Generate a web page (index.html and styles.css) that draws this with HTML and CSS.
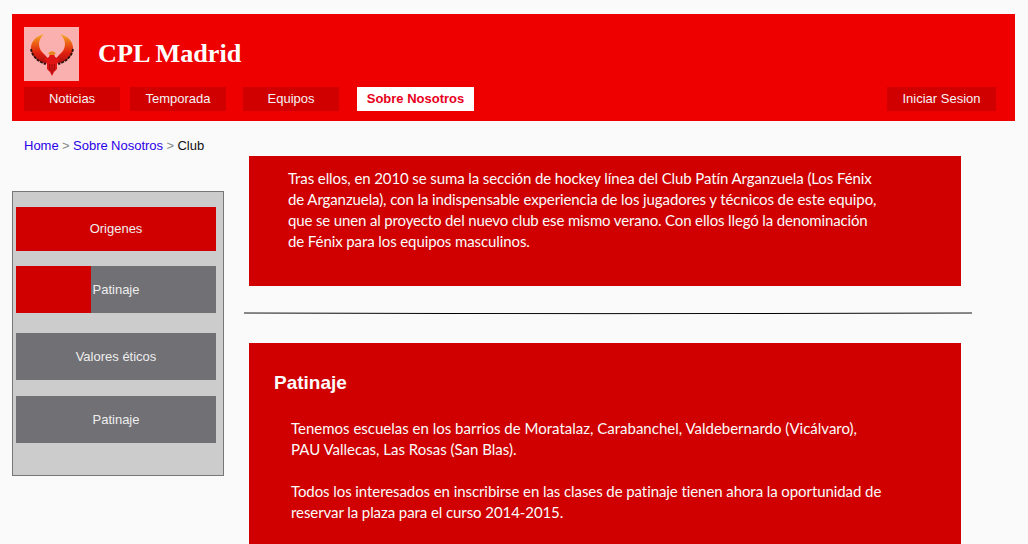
FILE: index.html
```html
<!DOCTYPE html>
<html lang="en">
<head>
    <meta charset="UTF-8">
    <meta name="viewport" content="width=device-width, initial-scale=1.0">
    <title>CPL Madrid</title>
    <link rel="stylesheet" href="styles.css">
</head>
<body>
    <header class="header">
        <div class="brand">
            <div class="logo">
                <svg class="phoenix" width="55" height="54" viewBox="0 0 55 54">
                    <defs>
                        <linearGradient id="wing" x1="0" y1="0" x2="0" y2="1">
                            <stop offset="0" stop-color="#f4b030"/>
                            <stop offset="0.3" stop-color="#ec6414"/>
                            <stop offset="0.65" stop-color="#e0200f"/>
                            <stop offset="1" stop-color="#b01010"/>
                        </linearGradient>
                    </defs>
                    <g>
                        <path d="M20 7C12 9 6 15 7 23C8 29 13 34 20 36L25 36C24 32 23 30 21 28C17 25 15 21 15 17C15 13 17 10 20 7Z" fill="url(#wing)"/>
                        <path d="M7 22C8 29 14 35 22 37" stroke="#2e1210" stroke-width="1.8" stroke-dasharray="3 1" fill="none"/>
                    </g>
                    <g transform="translate(56 0) scale(-1 1)">
                        <path d="M20 7C12 9 6 15 7 23C8 29 13 34 20 36L25 36C24 32 23 30 21 28C17 25 15 21 15 17C15 13 17 10 20 7Z" fill="url(#wing)"/>
                        <path d="M7 22C8 29 14 35 22 37" stroke="#2e1210" stroke-width="1.8" stroke-dasharray="3 1" fill="none"/>
                    </g>
                    <path d="M26 27L25 30L20 32L23 37L23 42L26 45L28 49L30 45L33 42L33 37L36 32L31 30L30 27Z" fill="#e01414"/>
                    <path d="M24 26L28 24L32 26L30 28L26 28Z" fill="#e8861c"/>
                    <path d="M28 37V47M25.5 37L26 44M30.5 37L30 44" stroke="#8a0a0a" stroke-width="0.8" fill="none"/>
                </svg>
            </div>
            <h1 class="title">CPL Madrid</h1>
        </div>
        <nav class="nav">
            <a class="nav-item" href="#">Noticias</a>
            <a class="nav-item" href="#">Temporada</a>
            <a class="nav-item nav-third" href="#">Equipos</a>
            <a class="nav-item nav-active" href="#">Sobre Nosotros</a>
            <a class="nav-item nav-login" href="#">Iniciar Sesion</a>
        </nav>
    </header>

    <div class="breadcrumb">
        <a href="#">Home</a> &gt; <a href="#">Sobre Nosotros</a> &gt; <span class="current">Club</span>
    </div>

    <div class="content">
        <aside class="sidebar">
            <a class="side-item side-first" href="#">Origenes</a>
            <a class="side-item side-sliding" href="#">Patinaje</a>
            <a class="side-item side-third" href="#">Valores éticos</a>
            <a class="side-item side-fourth" href="#">Patinaje</a>
        </aside>

        <main class="main">
            <section class="panel panel-top">
                <p>Tras ellos, en 2010 se suma la sección de hockey línea del Club Patín Arganzuela (Los Fénix<br>de Arganzuela), con la indispensable experiencia de los jugadores y técnicos de este equipo,<br><span class="tight">que se unen al proyecto del nuevo club ese mismo verano. Con ellos llegó la denominación</span><br>de Fénix para los equipos masculinos.</p>
            </section>
            <hr class="divider">
            <section class="panel panel-bottom">
                <h2>Patinaje</h2>
                <p class="loose">Tenemos escuelas en los barrios de Moratalaz, Carabanchel, Valdebernardo (Vicálvaro),<br>PAU Vallecas, Las Rosas (San Blas).</p>
                <p class="medium">Todos los interesados en inscribirse en las clases de patinaje tienen ahora la oportunidad de<br>reservar la plaza para el curso 2014-2015.</p>
            </section>
        </main>
    </div>
</body>
</html>
```

FILE: styles.css
```css
html, body {
    height: 544px;
    overflow: hidden;
}
body {
    margin: 0;
    background-color: #fafafa;
    font-family: "Liberation Sans", Arial, sans-serif;
}
a {
    text-decoration: none;
}
.header {
    margin: 14px 13px 0 12px;
    height: 107px;
    padding: 13px 19px 0 12px;
    box-sizing: border-box;
    background-color: #ee0000;
}
.brand {
    display: flex;
    align-items: center;
    height: 54px;
}
.logo {
    width: 55px;
    height: 54px;
    background-color: #fbb0b0;
}
.phoenix {
    display: block;
    filter: blur(0.4px);
}
.title {
    margin: 0 0 0 19px;
    color: #fff;
    font-family: "Liberation Serif", "Times New Roman", serif;
    font-size: 26.2px;
    font-weight: bold;
}
.nav {
    display: flex;
    margin-top: 6px;
}
.nav-item {
    width: 96px;
    height: 24px;
    margin-right: 10px;
    background-color: #d00000;
    color: #f4f4f4;
    font-size: 13px;
    line-height: 24px;
    text-align: center;
}
.nav-third {
    margin-left: 7px;
    margin-right: 18px;
}
.nav-active {
    width: 117px;
    background-color: #fff;
    color: #e8001c;
    font-weight: bold;
}
.nav-login {
    width: 109px;
    margin-left: auto;
    margin-right: 0;
}
.breadcrumb {
    height: 35px;
    padding-left: 24px;
    box-sizing: border-box;
    padding-top: 17px;
    color: #888;
    font-size: 13px;
    line-height: 15px;
    word-spacing: -0.25px;
}
.breadcrumb a {
    color: #2a00e8;
}
.current {
    color: #111;
}
.content {
    display: flex;
    align-items: flex-start;
    padding-left: 12px;
}
.sidebar {
    width: 212px;
    height: 285px;
    margin-top: 35px;
    padding: 15px 0 0 3px;
    box-sizing: border-box;
    background-color: #cccccc;
    border: 1px solid #777;
}
.side-item {
    display: block;
    width: 200px;
    height: 47px;
    background-color: #717075;
    color: #eee;
    font-size: 13px;
    line-height: 47px;
    text-align: center;
}
.side-first {
    height: 44px;
    background-color: #d00000;
    line-height: 43px;
    margin-bottom: 15px;
}
.side-sliding {
    background: linear-gradient(90deg, #d00000 75px, #717075 75px);
    margin-bottom: 20px;
}
.side-third {
    margin-bottom: 16px;
}
.main {
    width: 712px;
    margin-left: 25px;
}
.panel {
    background-color: #d00000;
    color: #fbfbfb;
    font-family: Lato, sans-serif;
    font-size: 15px;
    line-height: 21px;
    letter-spacing: -0.1px;
}
.panel p {
    margin: 0;
}
.panel .tight {
    letter-spacing: -0.145px;
}
.panel .loose {
    letter-spacing: 0;
}
.panel .medium {
    letter-spacing: -0.08px;
}
.panel-top {
    height: 130px;
    padding: 12px 0 0 39px;
    box-sizing: border-box;
}
.panel-bottom {
    height: 201px;
    padding: 27px 0 0 42px;
    box-sizing: border-box;
}
.panel-bottom h2 {
    margin: 0 0 22px -17px;
    font-family: "Liberation Sans", Arial, sans-serif;
    font-size: 19px;
    line-height: 26px;
    letter-spacing: 0;
}
.panel-bottom p + p {
    margin-top: 21px;
}
.divider {
    width: 728px;
    height: 3px;
    margin: 26px 0 28px -5px;
    border: none;
    background:
        linear-gradient(90deg, #888, #bbb 14%, transparent 28%, transparent 72%, #bbb 86%, #888) top / 100% 1px no-repeat,
        linear-gradient(90deg, #888, #333 18%, #000 28%, #222 50%, #000 72%, #333 82%, #888) center / 100% 1px no-repeat,
        linear-gradient(90deg, transparent 35%, #ddd 50%, transparent 65%) bottom / 100% 1px no-repeat;
}
```
